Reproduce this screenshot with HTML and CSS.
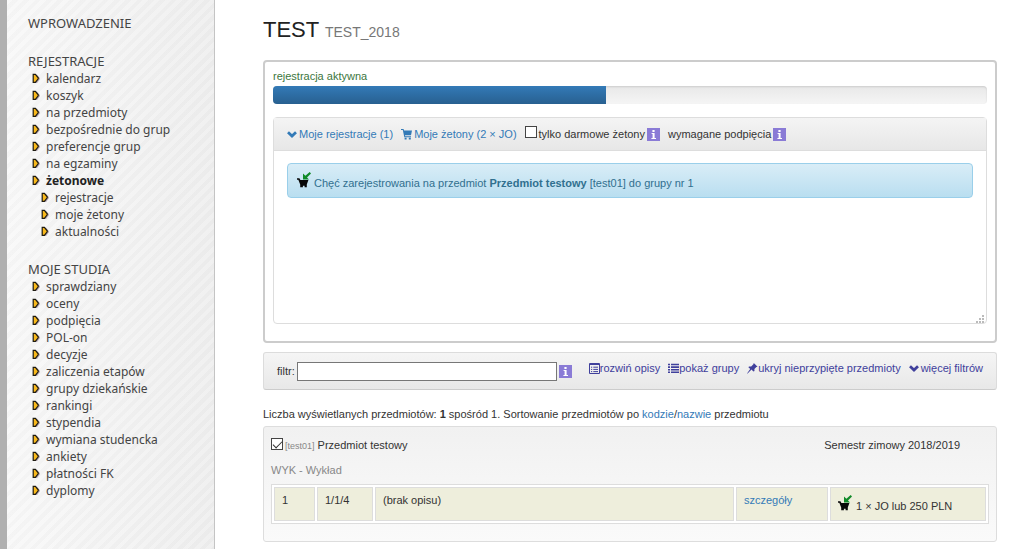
FILE: index.html
```html
<!DOCTYPE html>
<html lang="pl">
<head>
<meta charset="utf-8">
<title>TEST – rejestracja żetonowa</title>
<link rel="stylesheet" href="styles.css">
</head>
<body>
<svg class="defs" aria-hidden="true">
  <defs>
    <symbol id="bullet" viewBox="0 0 8 11"><path d="M2.5 2.5h2.2l2.6 3.2-2.6 3.6H2.5z" fill="none" stroke="#b9abb8" stroke-width="1.6"/><path d="M1.2 1.3h2.2l2.8 3.5v1L3.4 9.3H1.2z" fill="#f9b91c" stroke="#1d1a10" stroke-width="1.2"/></symbol>
    <symbol id="chevron" viewBox="0 0 10 8"><path d="M1 2.3L5 6l4-3.7" fill="none" stroke="currentColor" stroke-width="2.8"/></symbol>
    <symbol id="cart" viewBox="0 0 11 11"><path d="M0 0h2.6l.4 1.4h8L10 6.2H4l.2 1H10v1H3.3L1.8 1H0zM3.6 8.8h2v1.8h-2zM7.8 8.8h2v1.8h-2z" fill="currentColor"/></symbol>
    <symbol id="basket" viewBox="0 0 14 16"><path d="M0 6.2h2.4l1 1.8H11.4l-1.6 4.6v2.6H7.6v-1.4H5.9v1.4H3.2v-2.6L1.3 7.8H0z" fill="#080808"/><path d="M6 1.5v6h6l-2-2L14 1.4 12.7 0 8.4 3.8z" fill="#108a28"/></symbol>
    <symbol id="info" viewBox="0 0 13 13"><path d="M0 0h13v13H0z" fill="#8a7bd6"/><path d="M5.4 2h2.2v2H5.4zM4.6 5h3v5H9v1H4.4v-1h1.2V6h-1z" fill="#fff"/></symbol>
    <symbol id="details" viewBox="0 0 11 11"><path d="M.5.5h10v10H.5zM.5 1.5h10M2 4.2h1.2M4.3 4.2H9M2 6.4h1.2M4.3 6.4H9M2 8.6h1.2M4.3 8.6H9" fill="none" stroke="currentColor"/></symbol>
    <symbol id="list" viewBox="0 0 11 10"><path d="M0 1h2M3 1h8M0 3.6h2M3 3.6h8M0 6.2h2M3 6.2h8M0 8.8h2M3 8.8h8" fill="none" stroke="currentColor" stroke-width="1.6"/></symbol>
    <symbol id="pin" viewBox="0 0 11 11"><path d="M6.8 0L10.6 3.8l-1.2.2-2 2.1.1 2-1.1.5-1.9-2L.6 10.6l-.6-.2 3.2-4.3L1.4 4.3l.6-.9 2.2 0 2.2-2.2z" fill="currentColor"/></symbol>
  </defs>
</svg>
<div class="page">
  <nav class="sidebar">
    <ul class="menu">
      <li><a href="#">WPROWADZENIE</a></li>
    </ul>
    <ul class="menu">
      <li><a href="#">REJESTRACJE</a></li>
      <li class="item"><svg class="bullet"><use href="#bullet"/></svg><a href="#">kalendarz</a></li>
      <li class="item"><svg class="bullet"><use href="#bullet"/></svg><a href="#">koszyk</a></li>
      <li class="item"><svg class="bullet"><use href="#bullet"/></svg><a href="#">na przedmioty</a></li>
      <li class="item"><svg class="bullet"><use href="#bullet"/></svg><a href="#">bezpośrednie do grup</a></li>
      <li class="item"><svg class="bullet"><use href="#bullet"/></svg><a href="#">preferencje grup</a></li>
      <li class="item"><svg class="bullet"><use href="#bullet"/></svg><a href="#">na egzaminy</a></li>
      <li class="item current"><svg class="bullet"><use href="#bullet"/></svg><a href="#">żetonowe</a></li>
      <li class="item nested"><svg class="bullet"><use href="#bullet"/></svg><a href="#">rejestracje</a></li>
      <li class="item nested"><svg class="bullet"><use href="#bullet"/></svg><a href="#">moje żetony</a></li>
      <li class="item nested"><svg class="bullet"><use href="#bullet"/></svg><a href="#">aktualności</a></li>
    </ul>
    <ul class="menu">
      <li><a href="#">MOJE STUDIA</a></li>
      <li class="item"><svg class="bullet"><use href="#bullet"/></svg><a href="#">sprawdziany</a></li>
      <li class="item"><svg class="bullet"><use href="#bullet"/></svg><a href="#">oceny</a></li>
      <li class="item"><svg class="bullet"><use href="#bullet"/></svg><a href="#">podpięcia</a></li>
      <li class="item"><svg class="bullet"><use href="#bullet"/></svg><a href="#">POL-on</a></li>
      <li class="item"><svg class="bullet"><use href="#bullet"/></svg><a href="#">decyzje</a></li>
      <li class="item"><svg class="bullet"><use href="#bullet"/></svg><a href="#">zaliczenia etapów</a></li>
      <li class="item"><svg class="bullet"><use href="#bullet"/></svg><a href="#">grupy dziekańskie</a></li>
      <li class="item"><svg class="bullet"><use href="#bullet"/></svg><a href="#">rankingi</a></li>
      <li class="item"><svg class="bullet"><use href="#bullet"/></svg><a href="#">stypendia</a></li>
      <li class="item"><svg class="bullet"><use href="#bullet"/></svg><a href="#">wymiana studencka</a></li>
      <li class="item"><svg class="bullet"><use href="#bullet"/></svg><a href="#">ankiety</a></li>
      <li class="item"><svg class="bullet"><use href="#bullet"/></svg><a href="#">płatności FK</a></li>
      <li class="item"><svg class="bullet"><use href="#bullet"/></svg><a href="#">dyplomy</a></li>
    </ul>
  </nav>
  <main class="content">
    <h1 class="title">TEST <small class="code">TEST_2018</small></h1>

    <section class="status">
      <div class="state">rejestracja aktywna</div>
      <div class="progress"><div class="progress-bar" style="width: 46.7%"></div></div>
      <div class="panel">
        <div class="panel-head">
          <a class="link" href="#"><svg class="i-chevron"><use href="#chevron"/></svg>Moje rejestracje (1)</a>
          <a class="link" href="#"><svg class="i-11"><use href="#cart"/></svg>Moje żetony (2 × JO)</a>
          <span class="option"><input class="check" type="checkbox" id="free"><label for="free">tylko darmowe żetony</label><svg class="i-info"><use href="#info"/></svg></span>
          <span class="option"><span>wymagane podpięcia</span><svg class="i-info"><use href="#info"/></svg></span>
        </div>
        <div class="panel-body">
          <div class="alert"><svg class="i-basket"><use href="#basket"/></svg><span class="alert-text">Chęć zarejestrowania na przedmiot <b>Przedmiot testowy</b> [test01] do grupy nr 1</span></div>
        </div>
        <svg class="grip" viewBox="0 0 8 8"><path d="M6 0h2v2H6zM3 3h2v2H3zM6 3h2v2H6zM0 6h2v2H0zM3 6h2v2H3zM6 6h2v2H6z" fill="#bbb"/></svg>
      </div>
    </section>

    <form class="filters">
      <div class="filter-field"><label for="filter">filtr:</label><input class="filter-input" type="text" id="filter"><svg class="i-info"><use href="#info"/></svg></div>
      <div class="filter-links">
        <a class="tool" href="#"><svg class="i-11"><use href="#details"/></svg>rozwiń opisy</a>
        <a class="tool" href="#"><svg class="i-11"><use href="#list"/></svg>pokaż grupy</a>
        <a class="tool" href="#"><svg class="i-11"><use href="#pin"/></svg>ukryj nieprzypięte przedmioty</a>
        <a class="tool spaced" href="#"><svg class="i-chevron"><use href="#chevron"/></svg>więcej filtrów</a>
      </div>
    </form>

    <p class="summary">Liczba wyświetlanych przedmiotów: <b>1</b> spośród 1. Sortowanie przedmiotów po <a href="#">kodzie</a>/<a href="#">nazwie</a> przedmiotu</p>

    <section class="course">
      <div class="course-head">
        <div class="course-name"><input class="check" type="checkbox" id="course" checked><label for="course"><small class="course-code">[test01]</small> Przedmiot testowy</label></div>
        <div class="term">Semestr zimowy 2018/2019</div>
      </div>
      <div class="kind">WYK - Wykład</div>
      <table class="groups">
        <colgroup><col class="c-no"><col class="c-seats"><col><col class="c-more"><col class="c-price"></colgroup>
        <tr>
          <td>1</td><td>1/1/4</td><td>(brak opisu)</td><td><a href="#">szczegóły</a></td>
          <td><span class="price"><svg class="i-basket"><use href="#basket"/></svg><span class="price-text">1 × JO lub 250 PLN</span></span></td>
        </tr>
      </table>
    </section>
  </main>
</div>
</body>
</html>
```
FILE: styles.css
```css
* { box-sizing: border-box; }

body {
  margin: 0;
  background: #fff;
  color: #333;
  font: 11px/16px "Liberation Sans", Arial, sans-serif;
}

a { color: #337ab7; text-decoration: none; }
svg { flex: none; }
.defs { display: none; }

.page { display: flex; min-height: 100vh; }

.sidebar {
  flex: none;
  width: 215px;
  padding: 15px 0 20px 21px;
  border-left: 7px solid #b0b0b0;
  border-right: 1px solid #c4c4c4;
  background:
    repeating-linear-gradient(135deg, rgba(255, 255, 255, 0.25) 0 4px, rgba(235, 235, 235, 0.2) 4px 8px),
    linear-gradient(90deg, #f7f7f7, #ebebeb);
  font: 13px/17px "Noto Sans", "Open Sans", sans-serif;
}
.sidebar a { color: #444; }
.menu { margin: 0 0 21px; padding: 0; list-style: none; }
.item { display: flex; align-items: center; gap: 6px; padding-left: 4px; font-size: 12px; }
.nested { padding-left: 13px; }
.current { font-weight: bold; }
.sidebar .current a { color: #222; }
.bullet { width: 8px; height: 11px; }

.content { flex: 1; min-width: 0; padding: 16px 27px 8px 48px; }

.title { margin: 0 0 14px; color: #222; font-size: 22px; font-weight: normal; line-height: 28px; }
.code { color: #777; font-size: 14px; }

.status {
  padding: 6px 8px 17px;
  border: 2px solid #ccc;
  border-radius: 4px;
}
.state { margin-bottom: 2px; color: #3c763d; }
.progress {
  height: 18px;
  margin-bottom: 13px;
  overflow: hidden;
  border-radius: 4px;
  background: linear-gradient(#e8e8e8, #f5f5f5);
  box-shadow: inset 0 1px 2px rgba(0, 0, 0, 0.12);
}
.progress-bar { height: 100%; background: linear-gradient(#337ab7, #286090); }

.panel {
  display: flex;
  flex-direction: column;
  border: 1px solid #ddd;
  border-radius: 4px;
}
.panel-head {
  display: flex;
  align-items: center;
  gap: 8px;
  min-height: 33px;
  padding: 0 13px;
  border-bottom: 1px solid #ddd;
  background: linear-gradient(#f4f4f4, #e7e7e7);
}
.link, .option { display: flex; align-items: center; gap: 2px; }
.panel-body { min-height: 164px; padding: 12px 13px; }
.alert {
  display: flex;
  align-items: center;
  gap: 3px;
  min-height: 35px;
  padding: 0 9px 2px;
  border: 1px solid #9acfea;
  border-radius: 4px;
  background: linear-gradient(#d9edf7, #b9def0);
  color: #31708f;
}
.alert-text { padding-top: 6px; }
.grip { align-self: flex-end; width: 8px; height: 8px; margin-right: 2px; }

.i-chevron { width: 10px; height: 8px; }
.i-11 { width: 11px; height: 11px; }
.i-info { width: 13px; height: 13px; }
.i-basket { width: 14px; height: 16px; }

.check {
  flex: none;
  appearance: none;
  width: 12px;
  height: 12px;
  margin: 0 0 4px;
  border: 1px solid #444;
  background: #fff;
}
.check:checked::before {
  content: "";
  display: block;
  width: 8px;
  height: 4px;
  margin: 2px 1px;
  border: solid #333;
  border-width: 0 0 1px 1px;
  transform: rotate(-45deg);
}

.filters {
  display: flex;
  justify-content: space-between;
  min-height: 38px;
  margin: 9px 0 16px;
  padding: 8px 13px;
  border: 1px solid #dcdcdc;
  border-bottom-color: #ccc;
  border-radius: 3px;
  background: linear-gradient(#f5f5f5, #e8e8e8);
}
.filter-field { display: flex; align-items: center; gap: 2px; }
.filter-input {
  width: 260px;
  height: 19px;
  padding: 0 3px;
  border: 1px solid #777;
  background: #fff;
  font: inherit;
}
.filter-links { display: flex; gap: 8px; margin-top: -1px; }
.tool { display: flex; align-items: center; height: 16px; color: #40409c; }
.spaced { gap: 2px; }

.summary { margin: 0 0 4px; }

.course {
  padding: 10px 7px 17px;
  border: 1px solid #ddd;
  border-radius: 3px;
  background: linear-gradient(#f1f1f1, #fafafa);
}
.course-head { display: flex; justify-content: space-between; padding-right: 29px; }
.course-name { display: flex; align-items: center; gap: 2px; }
.course-code { color: #888; font-size: 9px; }
.kind { margin: 8px 0 6px; color: #888; }

.groups {
  width: 100%;
  border: 1px solid #ddd;
  border-spacing: 2px;
  background: #fff;
  table-layout: fixed;
}
.groups td { height: 34px; padding: 4px 7px; border: 1px solid #ddd; background: #eeeedc; vertical-align: top; }
.c-no { width: 41px; }
.c-seats { width: 56px; }
.c-more { width: 92px; }
.c-price { width: 156px; }
.price { display: flex; align-items: center; gap: 4px; }
.price-text { padding-top: 6px; }
```
